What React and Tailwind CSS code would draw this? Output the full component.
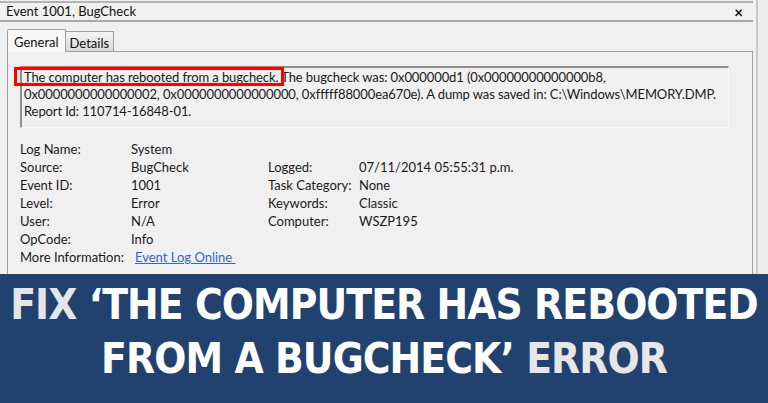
import React from "react";

const left = [
  ["Log Name:", "System"],
  ["Source:", "BugCheck"],
  ["Event ID:", "1001"],
  ["Level:", "Error"],
  ["User:", "N/A"],
  ["OpCode:", "Info"],
];

const right = [
  ["Logged:", "07/11/2014 05:55:31 p.m."],
  ["Task Category:", "None"],
  ["Keywords:", "Classic"],
  ["Computer:", "WSZP195"],
];

export default function App() {
  const ui = { fontFamily: "Lato, 'Noto Sans', sans-serif" };
  return (
    <div className="w-[768px] h-[403px] overflow-hidden bg-[#f0f0f0] flex flex-col">
      {/* window */}
      <div className="h-[274px] flex shrink-0" style={ui}>
        <div className="w-[753px] flex flex-col border-t-2 border-[#b4b4b4] mt-[1px]">
          {/* title bar */}
          <div className="h-[19px] flex items-center justify-between pl-[6px] pr-[10px] pt-[1px] border-b-2 border-[#a8a8a8] text-[13px] text-[#111]">
            <span>Event 1001, BugCheck</span>
            <span className="text-[15px] font-bold leading-none">×</span>
          </div>

          {/* tabs */}
          <div className="flex items-end pl-[7px] mt-[6px] h-[23px] text-[13px] text-[#111]">
            <div className="h-[23px] px-[6px] pt-[3px] bg-[#f7f7f7] border border-b-0 border-[#a0a0a0] rounded-t-[2px] relative z-10 -mb-px">
              General
            </div>
            <div className="h-[20px] px-[4px] pt-[2px] bg-gradient-to-b from-[#f4f4f4] to-[#d8d8d8] border border-l-0 border-b-0 border-[#a0a0a0]">
              Details
            </div>
          </div>

          {/* tab panel */}
          <div className="flex-1 ml-[7px] border border-b-0 border-[#a0a0a0] bg-[#f0f0f0] pt-[14px] pl-[12px] pr-[23px]">
            <div className="relative h-[62px] border-t-2 border-l-2 border-[#8f8f8f] border-r border-b border-r-[#fafafa] border-b-[#fafafa] pl-[2px] pt-[1px] text-[13px] leading-[17px] text-[#1a1a1a] tracking-[-0.1px]">
              <p>
                The computer has rebooted from a bugcheck. The bugcheck was: 0x000000d1 (0x00000000000000b8,
                <br />
                0x0000000000000002, 0x0000000000000000, 0xfffff88000ea670e). A dump was saved in: C:\Windows\MEMORY.DMP.
                <br />
                Report Id: 110714-16848-01.
              </p>
              <div className="absolute left-[-8px] top-[-1px] w-[270px] h-[19px] border-[3px] border-[#ff0000]" />
            </div>

            <div className="flex mt-[12px] text-[13px] leading-[18px] text-[#1a1a1a]">
              <div className="w-[248px]">
                {left.map(([k, v]) => (
                  <div key={k} className="flex">
                    <span className="w-[111px]">{k}</span>
                    <span>{v}</span>
                  </div>
                ))}
                <div className="flex">
                  <span className="w-[115px]">More Information:</span>
                  <span className="text-[#3366cc] underline">Event Log Online&nbsp;</span>
                </div>
              </div>
              <div className="pt-[18px]">
                {right.map(([k, v]) => (
                  <div key={k} className="flex">
                    <span className="w-[91px]">{k}</span>
                    <span>{v}</span>
                  </div>
                ))}
              </div>
            </div>
          </div>
        </div>
        <div className="flex-1 border-l-2 border-[#c8c8c8] ml-[3px] bg-[#ececec]" />
      </div>

      {/* banner */}
      <div
        className="flex-1 bg-[#21416f] flex flex-col items-center justify-center pb-[14px] text-white font-bold uppercase leading-[54px] text-[42px] tracking-[-0.9px]"
        style={{ fontFamily: "'DejaVu Sans Condensed', 'DejaVu Sans', sans-serif" }}
      >
        <div>
          <span className="text-[#e6e6e6]">FIX</span> ‘THE COMPUTER HAS REBOOTED
        </div>
        <div>
          FROM A BUGCHECK’ <span className="text-[#e6e6e6]">ERROR</span>
        </div>
      </div>
    </div>
  );
}
